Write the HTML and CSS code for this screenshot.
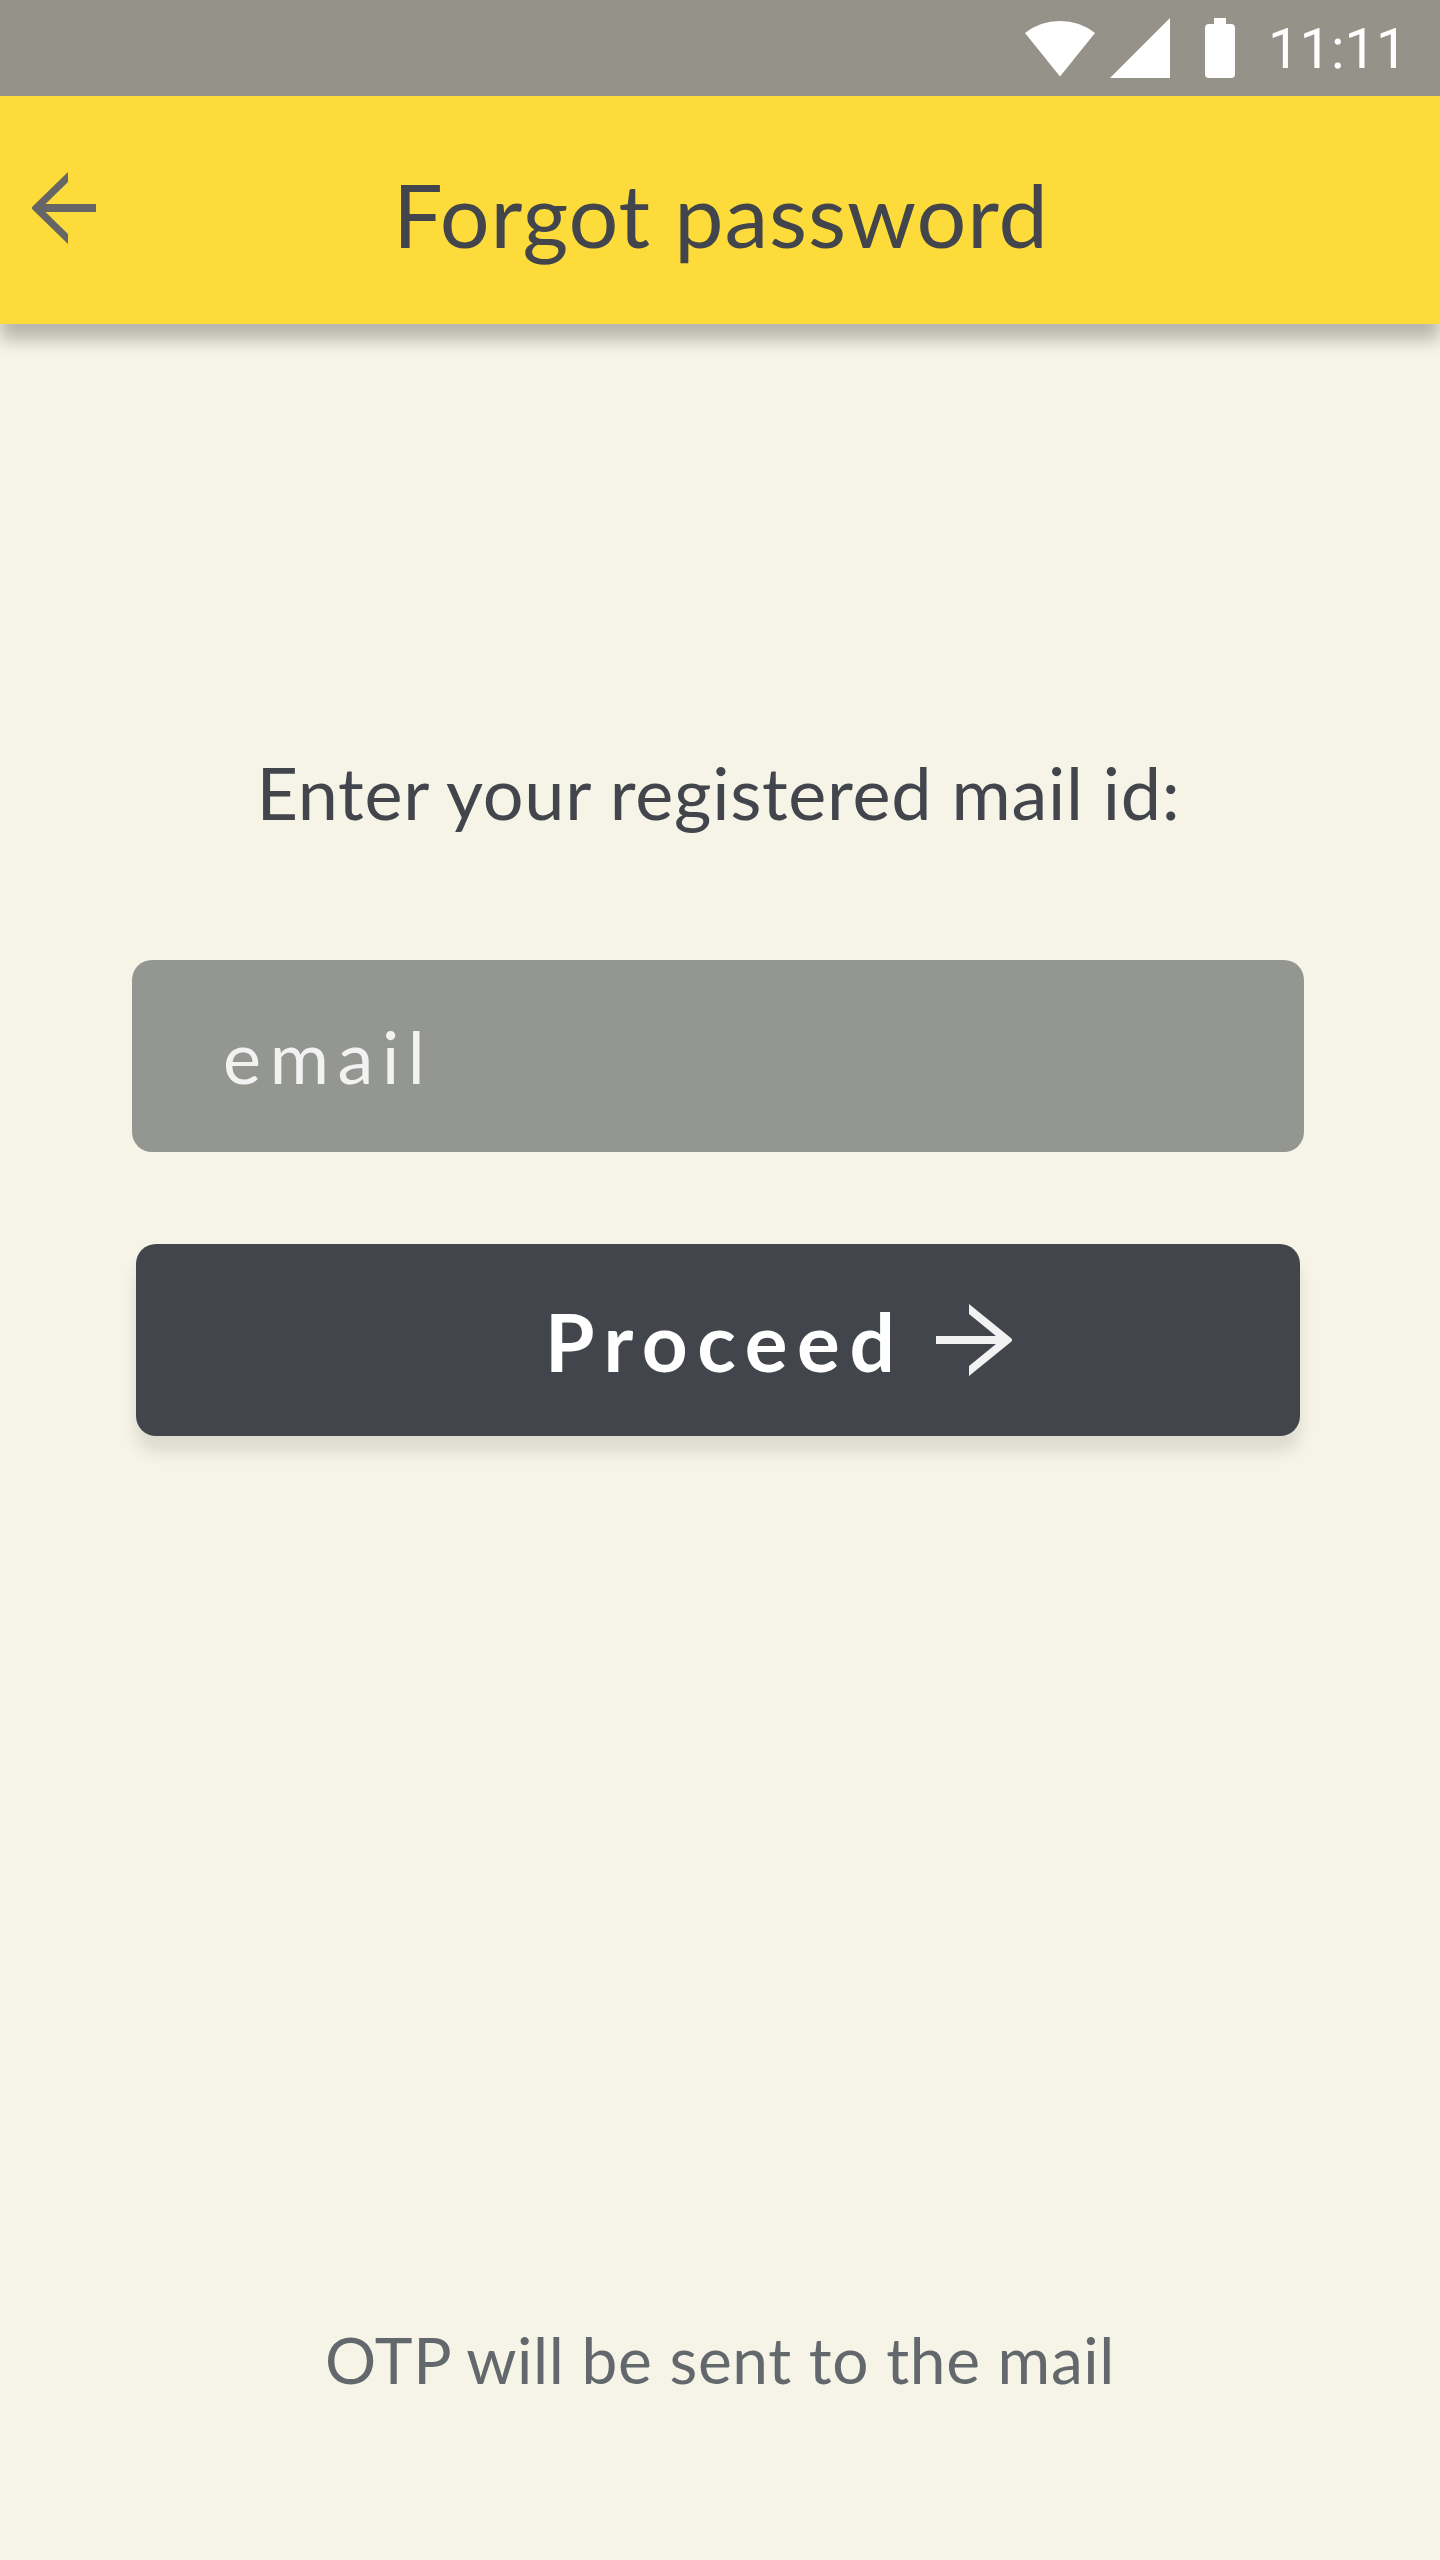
FILE: index.html
```html
<!DOCTYPE html>
<html lang="en">
<head>
<meta charset="utf-8">
<title>Forgot password</title>
<link rel="stylesheet" href="styles.css">
</head>
<body>
<div class="screen">
  <div class="status-bar">
    <svg class="wifi" width="70" height="56" viewBox="0 0 70 56"><path d="M0 12Q15 0 35 0T70 12L35 55.500Z"/></svg>
    <svg class="signal" width="60" height="60" viewBox="0 0 60 60"><path d="M60 0V60H0Z"/></svg>
    <svg class="battery" width="30" height="60" viewBox="0 0 30 60"><path d="M9 0H21V6H26Q30 6 30 10V56Q30 60 26 60H4Q0 60 0 56V10Q0 6 4 6H9Z"/></svg>
    <span class="clock">11:11</span>
  </div>
  <header class="app-bar">
    <svg class="back" width="64" height="72" viewBox="0 0 64 72"><path d="M36 0V10L13.500 32H64V40H13.500L36 62V72L.5 37.500Q-.5 36 .5 34.500Z"/></svg>
    <h1 class="title">Forgot password</h1>
  </header>
  <main class="content">
    <p class="prompt">Enter your registered mail id:</p>
    <div class="field"><span class="placeholder">email</span></div>
    <button class="proceed" type="button">
      <span class="proceed-label">Proceed</span>
      <svg class="forward" width="76" height="72" viewBox="0 0 76 72"><path d="M33 0L75.500 34.500Q76.500 36 75.500 37.500L33 72V62L60 40H0V32H60L33 10Z"/></svg>
    </button>
  </main>
  <footer class="note">OTP will be sent to the mail</footer>
</div>
</body>
</html>
```
FILE: styles.css
```css
* { box-sizing: border-box; }

body {
  margin: 0;
  background: #f6f4e6;
  font-family: Lato, "Liberation Sans", sans-serif;
  color: #42454c;
}

svg { display: block; flex: none; }

.screen {
  display: flex;
  flex-direction: column;
  width: 1440px;
  height: 2560px;
  overflow: hidden;
}

.status-bar {
  display: flex;
  justify-content: flex-start;
  flex: none;
  height: 96px;
  padding: 18px 0 0 1025px;
  background: #959289;
  fill: #fff;
}

.wifi { margin-top: 3px; }
.signal { margin-left: 15px; }
.battery { margin-left: 35px; }

.clock {
  margin-left: 33px;
  font: 56px/62px Roboto, sans-serif;
  color: #fff;
}

.app-bar {
  display: flex;
  flex: none;
  height: 228px;
  padding-left: 32px;
  background: #fddb3a;
  box-shadow: 0 16px 16px rgba(0, 0, 0, .25);
}

.back {
  margin-top: 76px;
  fill: #666;
}

.title {
  margin: 0 0 0 297px;
  font-size: 88px;
  font-weight: 400;
  line-height: 236px;
  letter-spacing: .01em;
  white-space: nowrap;
}

.content {
  display: flex;
  flex-direction: column;
  align-items: center;
  flex: 1;
  padding-top: 418px;
}

.prompt {
  margin: 0 3px 0 0;
  font-size: 72px;
  line-height: 100px;
  letter-spacing: .01em;
  white-space: nowrap;
}

.field {
  width: 1172px;
  height: 192px;
  margin: 118px 4px 0 0;
  padding-left: 91px;
  border-radius: 20px;
  background: #949691;
}

.placeholder {
  font-size: 72px;
  line-height: 192px;
  letter-spacing: .12em;
  color: #f2f2f2;
}

.proceed {
  display: flex;
  width: 1164px;
  height: 192px;
  margin: 92px 4px 0 0;
  padding: 0 0 0 409px;
  border: 0;
  border-radius: 20px;
  background: #42454c;
  box-shadow: 0 16px 16px rgba(0, 0, 0, .1);
  font-family: inherit;
  text-align: left;
}

.proceed-label {
  width: 391px;
  font-size: 80px;
  font-weight: 700;
  line-height: 194px;
  letter-spacing: .12em;
  color: #fff;
}

.forward {
  margin-top: 60px;
  fill: #f2f2f2;
}

.note {
  height: 250px;
  font-size: 64px;
  line-height: 100px;
  letter-spacing: .01em;
  text-align: center;
  color: #62686c;
}
```
